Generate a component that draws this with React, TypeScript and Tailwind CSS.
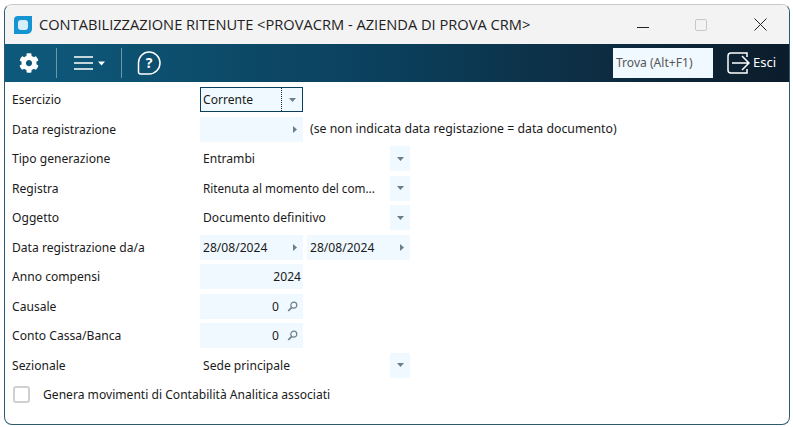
import React from 'react';
import { FaCog } from 'react-icons/fa';

const Arrow = ({ dir = 'down' }: { dir?: 'down' | 'right' }) =>
  dir === 'down' ? (
    <svg width="7" height="4" viewBox="0 0 7 4"><path d="M0 0h7L3.5 4z" fill="#6b7f8b" /></svg>
  ) : (
    <svg width="4" height="7" viewBox="0 0 4 7"><path d="M0 0l4 3.5L0 7z" fill="#6b7f8b" /></svg>
  );

const Lens = () => (
  <svg width="11" height="11" viewBox="0 0 11 11" fill="none" stroke="#6b7f8b">
    <circle cx="6.8" cy="4.2" r="3" strokeWidth="1.2" />
    <path d="M4.6 6.6L1.2 10" strokeWidth="1.7" />
  </svg>
);

const Row = ({ label, children }: { label: string; children: React.ReactNode }) => (
  <div className="flex h-[25px] items-center">
    <div className="w-[188px] shrink-0 pt-px">{label}</div>
    {children}
  </div>
);

// campo data con freccina a destra
const DateField = ({ value = '' }: { value?: string }) => (
  <div className="flex h-[25px] w-[103px] items-center justify-between bg-[#f0f9ff] pl-[3px] pr-[6px]">
    <span className="pt-px">{value}</span>
    <Arrow dir="right" />
  </div>
);

const NumField = ({ value, lens }: { value: string; lens?: boolean }) => (
  <div className={`flex h-[25px] w-[103px] items-center justify-end bg-[#f0f9ff] ${lens ? 'gap-[8px] pr-[5px]' : 'pr-[2px]'}`}>
    <span className="pt-px">{value}</span>
    {lens ? <Lens /> : null}
  </div>
);

const Combo = ({ value, className = '' }: { value: string; className?: string }) => (
  <div className="flex h-[25px] w-[210px] items-center">
    <span className={`flex-1 whitespace-nowrap pl-[3px] pt-px ${className}`}>{value}</span>
    <div className="flex h-[25px] w-[20px] items-center justify-center bg-[#f0f9ff]">
      <Arrow />
    </div>
  </div>
);

export default function App() {
  return (
    <div className="h-[427px] w-[793px] overflow-hidden bg-white p-[4px] pb-[2px] pr-[3px]" style={{ fontFamily: '"Noto Sans", sans-serif' }}>
      <div className="flex h-[421px] flex-col overflow-hidden rounded-[8px] border border-x-[#2d5a70] border-b-[#2d5a70] border-t-[#c9c9c9] bg-white text-[12.1px] text-[#1a1a1a]">
        <div className="flex h-[39px] shrink-0 items-center bg-[#f3f3f3] pl-[8px]">
          <svg width="20" height="20" viewBox="0 0 20 20">
            <path d="M5 1h14v13a5 5 0 0 1-5 5H1V5a4 4 0 0 1 4-4z" fill="#1594d2" />
            <rect x="5" y="5" width="10" height="10" rx="3" fill="#d6eefa" />
          </svg>
          <span className="ml-[6px] text-[14.65px] text-[#222]" style={{ fontFamily: '"Open Sans", sans-serif' }}>
            CONTABILIZZAZIONE RITENUTE &lt;PROVACRM - AZIENDA DI PROVA CRM&gt;
          </span>
          <div className="ml-auto flex items-center">
            <div className="mr-[46px] mt-[5px] h-px w-[12px] bg-[#222]" />
            <div className="mr-[47px] h-[12px] w-[12px] rounded-[2px] border border-[#c8c8c8]" />
            <svg width="13" height="13" viewBox="0 0 13 13" className="mr-[22px]"><path d="M.5.5l12 12M12.5.5l-12 12" stroke="#222" /></svg>
          </div>
        </div>

        <div className="flex h-[38px] shrink-0 items-center bg-gradient-to-r from-[#0e5a7c] via-[#0b3f5b] to-[#0b1c2b] text-white">
          <FaCog size={20} className="ml-[14px]" />
          <div className="ml-[17px] h-[30px] w-px bg-[#6d97ad]" />
          <svg width="32" height="16" viewBox="0 0 32 16" className="ml-[17px]" fill="none" stroke="white" strokeWidth="1.5">
            <path d="M0 2h19M0 8h19M0 14h19" />
            <path d="M24 6.5h7l-3.5 4z" fill="white" stroke="none" />
          </svg>
          <div className="ml-[15px] h-[30px] w-px bg-[#6d97ad]" />
          <svg width="24" height="24" viewBox="0 0 24 24" className="ml-[15px]" fill="none" stroke="white" strokeWidth="1.5">
            <path d="M12 1a11 11 0 1 1 0 22H3.5a2 2 0 0 1-2-2.2V12A10.5 11 0 0 1 12 1z" />
            <text x="12" y="17" fontSize="14" fontWeight="700" fill="white" stroke="none" textAnchor="middle">?</text>
          </svg>
          <div className="ml-auto mr-[13px] flex h-[30px] w-[100px] items-center bg-[#f0f9ff] pl-[3px] text-[#555]">Trova (Alt+F1)</div>
          <svg width="24" height="24" viewBox="0 0 24 24" fill="none" stroke="white" strokeWidth="1.5" className="mr-[3px]">
            <path d="M14 2H5a3 3 0 0 0-3 3v14a3 3 0 0 0 3 3h9" />
            <path d="M14 2h7v4M21 18v4h-7" />
            <path d="M6 12h16M16 5l7 7-7 7" />
          </svg>
          <span className="mr-[13px] text-[13px]">Esci</span>
        </div>

        <div className="flex flex-col gap-[4.5px] pl-[7px] pt-[5.1px]">
          <Row label="Esercizio">
            <div className="flex h-[25px] w-[103px] items-center border border-[#0b3f5b] bg-[#f0f9ff] pl-[2px]">
              <span className="flex-1 pt-px">Corrente</span>
              <div className="flex h-full w-[21px] items-center justify-center border-l border-dotted border-[#222]">
                <Arrow />
              </div>
            </div>
          </Row>
          <Row label="Data registrazione">
            <DateField />
            <span className="ml-[7px] pt-px text-[12.3px]">(se non indicata data registazione = data documento)</span>
          </Row>
          <Row label="Tipo generazione"><Combo value="Entrambi" /></Row>
          <Row label="Registra"><Combo value="Ritenuta al momento del com..." className="text-[11.7px]" /></Row>
          <Row label="Oggetto"><Combo value="Documento definitivo" /></Row>
          <Row label="Data registrazione da/a">
            <DateField value="28/08/2024" />
            <div className="ml-[4px]"><DateField value="28/08/2024" /></div>
          </Row>
          <Row label="Anno compensi"><NumField value="2024" /></Row>
          <Row label="Causale"><NumField value="0" lens /></Row>
          <Row label="Conto Cassa/Banca"><NumField value="0" lens /></Row>
          <Row label="Sezionale"><Combo value="Sede principale" /></Row>
          <div className="flex h-[25px] items-center pl-[1px]">
            <div className="h-[17px] w-[17px] rounded-[3px] border-2 border-[#d0d0d0]" />
            <span className="ml-[13px] pt-px">Genera movimenti di Contabilità Analitica associati</span>
          </div>
        </div>
      </div>
    </div>
  );
}
